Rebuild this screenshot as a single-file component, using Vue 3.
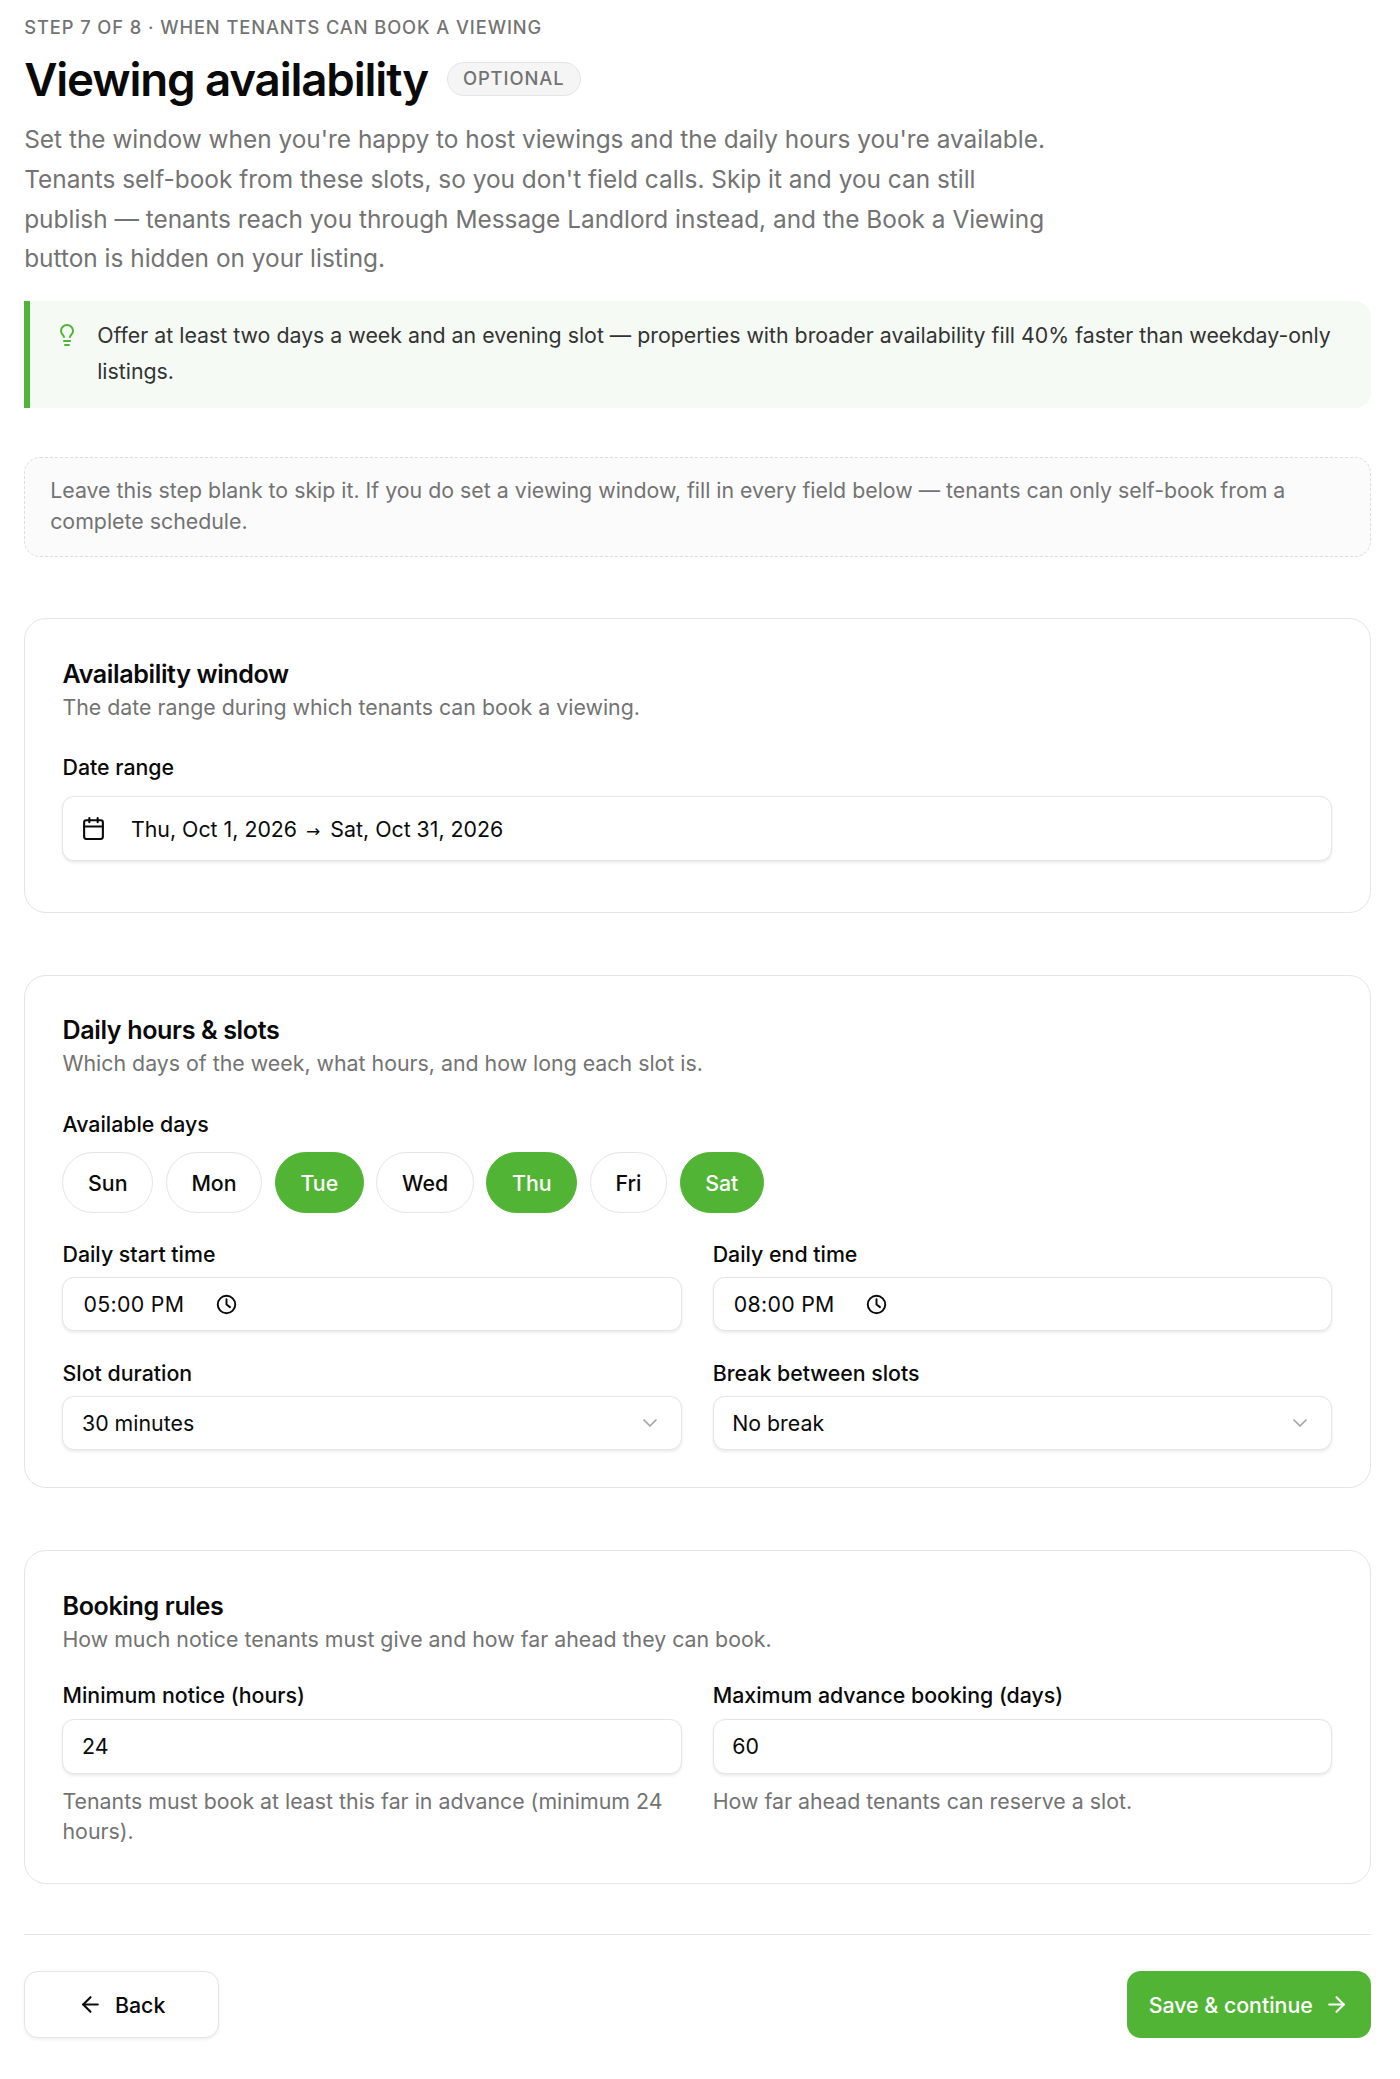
<script setup>
const days = [
  { n: 'Sun', on: false }, { n: 'Mon', on: false }, { n: 'Tue', on: true }, { n: 'Wed', on: false },
  { n: 'Thu', on: true }, { n: 'Fri', on: false }, { n: 'Sat', on: true },
]
</script>

<template>
  <div class="page">
    <div class="step">Step 7 of 8 · When tenants can book a viewing</div>
    <div class="head">
      <h1>Viewing availability</h1>
      <span class="badge">OPTIONAL</span>
    </div>
    <p class="lead">Set the window when you're happy to host viewings and the daily hours you're available. Tenants self-book from these slots, so you don't field calls. Skip it and you can still publish — tenants reach you through Message Landlord instead, and the Book a Viewing button is hidden on your listing.</p>

    <div class="tip">
      <svg class="tip-icon" viewBox="0 0 24 24" fill="none" stroke="currentColor" stroke-width="2" stroke-linecap="round" stroke-linejoin="round"><path d="M15 14c.2-1 .7-1.7 1.5-2.5 1-.9 1.5-2.2 1.5-3.5A6 6 0 0 0 6 8c0 1 .2 2.2 1.5 3.5.7.7 1.3 1.5 1.5 2.5"/><path d="M9 18h6"/><path d="M10 22h4"/></svg>
      <span>Offer at least two days a week and an evening slot — properties with broader availability fill 40% faster than weekday-only listings.</span>
    </div>

    <div class="note">Leave this step blank to skip it. If you do set a viewing window, fill in every field below — tenants can only self-book from a complete schedule.</div>

    <section class="card c1">
      <h2>Availability window</h2>
      <p class="sub">The date range during which tenants can book a viewing.</p>
      <label class="lbl first dl">Date range</label>
      <div class="field date">
        <svg class="cal" viewBox="0 0 24 24" fill="none" stroke="currentColor" stroke-width="2" stroke-linecap="round" stroke-linejoin="round"><path d="M8 2v4"/><path d="M16 2v4"/><rect x="3" y="4" width="18" height="18" rx="2"/><path d="M3 10h18"/></svg>
        <span>Thu, Oct 1, 2026 <span class="arr">→</span> Sat, Oct 31, 2026</span>
      </div>
    </section>

    <section class="card c2">
      <h2>Daily hours &amp; slots</h2>
      <p class="sub">Which days of the week, what hours, and how long each slot is.</p>
      <label class="lbl first al">Available days</label>
      <div class="days">
        <span v-for="d in days" :key="d.n" class="day" :class="{ on: d.on }">{{ d.n }}</span>
      </div>
      <div class="grid g1">
        <div>
          <label class="lbl">Daily start time</label>
          <div class="field time">
            <span>05:00 PM</span>
            <svg class="clk" viewBox="0 0 24 24" fill="none" stroke="currentColor" stroke-width="2.2" stroke-linecap="round" stroke-linejoin="round"><circle cx="12" cy="12" r="10"/><path d="M12 6v6l4 3"/></svg>
          </div>
        </div>
        <div>
          <label class="lbl">Daily end time</label>
          <div class="field time">
            <span>08:00 PM</span>
            <svg class="clk" viewBox="0 0 24 24" fill="none" stroke="currentColor" stroke-width="2.2" stroke-linecap="round" stroke-linejoin="round"><circle cx="12" cy="12" r="10"/><path d="M12 6v6l4 3"/></svg>
          </div>
        </div>
        <div>
          <label class="lbl tight">Slot duration</label>
          <div class="field sel">
            <span>30 minutes</span>
            <svg class="chev" viewBox="0 0 24 24" fill="none" stroke="currentColor" stroke-width="1.7" stroke-linecap="round" stroke-linejoin="round"><path d="m6 9 6 6 6-6"/></svg>
          </div>
        </div>
        <div>
          <label class="lbl tight">Break between slots</label>
          <div class="field sel">
            <span>No break</span>
            <svg class="chev" viewBox="0 0 24 24" fill="none" stroke="currentColor" stroke-width="1.7" stroke-linecap="round" stroke-linejoin="round"><path d="m6 9 6 6 6-6"/></svg>
          </div>
        </div>
      </div>
    </section>

    <section class="card c3">
      <h2>Booking rules</h2>
      <p class="sub">How much notice tenants must give and how far ahead they can book.</p>
      <div class="grid g2">
        <div>
          <label class="lbl tight">Minimum notice (hours)</label>
          <div class="field sel tall"><span>24</span></div>
          <p class="help">Tenants must book at least this far in advance (minimum 24 hours).</p>
        </div>
        <div>
          <label class="lbl tight">Maximum advance booking (days)</label>
          <div class="field sel tall"><span>60</span></div>
          <p class="help">How far ahead tenants can reserve a slot.</p>
        </div>
      </div>
    </section>

    <div class="foot">
      <button class="btn back">
        <svg viewBox="0 0 24 24" fill="none" stroke="currentColor" stroke-width="2" stroke-linecap="round" stroke-linejoin="round"><path d="m12 19-7-7 7-7"/><path d="M19 12H5"/></svg>
        Back
      </button>
      <button class="btn save">
        Save &amp; continue
        <svg viewBox="0 0 24 24" fill="none" stroke="currentColor" stroke-width="2" stroke-linecap="round" stroke-linejoin="round"><path d="M5 12h14"/><path d="m12 5 7 7-7 7"/></svg>
      </button>
    </div>
  </div>
</template>

<style>
html, body { margin: 0; background: #fff; }
</style>

<style scoped>
.page { box-sizing: border-box; width: 1400px; height: 2079px; padding: 16px 29.3px 0 24.2px; font-family: Inter, "Liberation Sans", sans-serif; color: #0a0a0a; overflow: hidden; }
.step { font-size: 18.3px; line-height: 22px; font-weight: 500; letter-spacing: 0.05em; text-transform: uppercase; color: #737373; }
.head { display: flex; align-items: center; gap: 19px; margin-top: 14.5px; height: 54px; }
h1 { margin: 0; font-size: 45.7px; line-height: 54px; font-weight: 600; letter-spacing: -0.025em; }
.badge { box-sizing: border-box; display: flex; align-items: center; height: 34px; margin-top: -1.5px; padding: 0 15px 1px; border: 1.5px solid #e5e5e5; border-radius: 17px; background: #f5f5f5; color: #737373; font-size: 18.4px; font-weight: 500; letter-spacing: 0.05em; }
.lead { margin: 13.5px 0 0; max-width: 1030px; font-size: 24.4px; line-height: 39.8px; color: #737373; }
.tip { box-sizing: border-box; display: flex; gap: 18px; margin-top: 21.8px; height: 107px; padding: 16.5px 30px 0 25px; border-left: 6px solid #52b435; border-radius: 0 16px 16px 0; background: #f5faf4; font-size: 21.33px; line-height: 36px; color: #333; }
.tip-icon { flex: none; width: 24px; height: 24px; margin-top: 5.5px; color: #52b435; }
.note { box-sizing: border-box; margin-top: 49.5px; height: 99.5px; padding: 17px 25px; border: 1.5px dashed #dedede; border-radius: 16px; background: #fbfbfb; font-size: 21.33px; line-height: 30.5px; color: #737373; }
.card { box-sizing: border-box; border: 1.5px solid #e5e5e5; border-radius: 22px; padding: 38px 37.3px 0; margin-top: 61px; }
.c1 { height: 295px; padding-top: 39px; }
.c2 { height: 513.4px; margin-top: 61.6px; }
.c3 { height: 334px; margin-top: 62px; padding-top: 39px; }
h2 { margin: 0; font-size: 25.1px; line-height: 32px; font-weight: 600; letter-spacing: -0.015em; }
.sub { margin: 1.3px 0 0; font-size: 21.33px; line-height: 32px; color: #737373; }
.lbl { display: block; font-size: 21.33px; line-height: 30px; font-weight: 500; margin-bottom: 8.5px; }
.lbl.first { margin-top: 30px; }
.c1 .lbl.first { margin-top: 29px; }
.lbl.dl { margin-bottom: 14.2px; }
.lbl.al { margin-bottom: 13.5px; }
.lbl.tight { margin-bottom: 8.3px; }
.field { box-sizing: border-box; display: flex; align-items: center; height: 54px; border: 1.5px solid #e5e5e5; border-radius: 12px; background: #fff; box-shadow: 0 1.5px 3px rgba(0,0,0,.08); font-size: 21.33px; }
.date { height: 65px; padding: 0 18px; gap: 24.5px; }
.cal { width: 25px; height: 25px; flex: none; }
.arr { font-size: 17px; margin: 0 4px 0 3px; font-family: "DejaVu Sans", sans-serif; }
.days { display: flex; gap: 12.7px; }
.day { box-sizing: border-box; display: flex; align-items: center; justify-content: center; height: 61px; padding: 0 24.6px; border: 1.5px solid #e5e5e5; border-radius: 31px; font-size: 21.33px; font-weight: 500; }
.day.on { background: #52b435; border-color: #52b435; color: #fff; }
.grid { display: grid; grid-template-columns: 1fr 1fr; column-gap: 30.5px; row-gap: 26.7px; }
.g1 { margin-top: 25.5px; }
.g2 { margin-top: 25px; }
.time { padding: 0 19.5px 0 20px; gap: 31.5px; letter-spacing: .3px; }
.clk { width: 21px; height: 21px; flex: none; }
.sel { padding: 0 19px 0 18.5px; justify-content: space-between; }
.tall { height: 55px; }
.chev { width: 24px; height: 24px; color: #a3a3a3; flex: none; }
.help { margin: 12px 0 0; font-size: 21.33px; line-height: 30.5px; color: #737373; }
.foot { display: flex; justify-content: space-between; margin-top: 49.6px; padding-top: 36.6px; border-top: 1.5px solid #e5e5e5; }
.btn { box-sizing: border-box; display: inline-flex; align-items: center; height: 67px; font-family: inherit; font-size: 21.33px; font-weight: 500; border-radius: 14px; }
.btn svg { width: 25px; height: 25px; }
.back { width: 195px; justify-content: center; gap: 12px; background: #fff; color: #0a0a0a; border: 1.5px solid #e5e5e5; box-shadow: 0 1.5px 3px rgba(0,0,0,.06); }
.save { width: 244px; justify-content: center; gap: 11px; background: #52b435; color: #fff; border: 0; }
</style>
